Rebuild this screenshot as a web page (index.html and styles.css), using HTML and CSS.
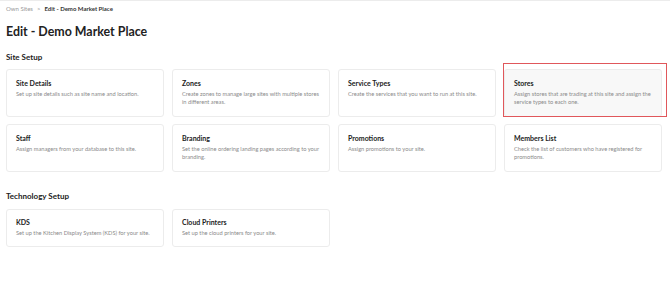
FILE: index.html
```html
<!DOCTYPE html>
<html>
<head>
<meta charset="utf-8">
<link rel="stylesheet" href="styles.css">
</head>
<body>
<div class="page">
  <nav class="crumbs"><span class="crumb-link">Own Sites</span><span class="crumb-sep">&gt;</span><span class="crumb-current">Edit - Demo Market Place</span></nav>
  <h1 class="title">Edit - Demo Market Place</h1>

  <h2 class="section-title">Site Setup</h2>
  <div class="grid">
    <div class="card"><div class="card-title">Site Details</div><div class="card-desc">Set up site details such as site name and location.</div></div>
    <div class="card"><div class="card-title">Zones</div><div class="card-desc">Create zones to manage large sites with multiple stores in different areas.</div></div>
    <div class="card"><div class="card-title">Service Types</div><div class="card-desc">Create the services that you want to run at this site.</div></div>
    <div class="card card-hover"><div class="card-title">Stores</div><div class="card-desc">Assign stores that are trading at this site and assign the service types to each one.</div><div class="highlight"></div></div>
    <div class="card"><div class="card-title">Staff</div><div class="card-desc">Assign managers from your database to this site.</div></div>
    <div class="card"><div class="card-title">Branding</div><div class="card-desc">Set the online ordering landing pages according to your branding.</div></div>
    <div class="card"><div class="card-title">Promotions</div><div class="card-desc">Assign promotions to your site.</div></div>
    <div class="card"><div class="card-title">Members List</div><div class="card-desc">Check the list of customers who have registered for promotions.</div></div>
  </div>

  <h2 class="section-title section-tech">Technology Setup</h2>
  <div class="grid">
    <div class="card card-short"><div class="card-title">KDS</div><div class="card-desc">Set up the Kitchen Display System (KDS) for your site.</div></div>
    <div class="card card-short"><div class="card-title">Cloud Printers</div><div class="card-desc">Set up the cloud printers for your site.</div></div>
  </div>
</div>
</body>
</html>
```
FILE: styles.css
```css
html, body {
  margin: 0;
  padding: 0;
  background: #ffffff;
}
body {
  font-family: Lato, "Open Sans", sans-serif;
  color: #222222;
  border-top: 1px solid #ececec;
}
.page {
  padding: 0 8px 0 6px;
}
.crumbs {
  display: flex;
  gap: 4px;
  font-size: 6px;
  line-height: 8px;
  padding-top: 4px;
}
.crumb-link, .crumb-sep {
  color: #9a9a9a;
}
.crumb-current {
  font-weight: 700;
  color: #333333;
}
.title {
  margin: 0;
  font-size: 12.4px;
  line-height: 18px;
  font-weight: 700;
  padding-top: 10px;
  color: #222222;
}
.section-title {
  margin: 0;
  font-size: 8px;
  line-height: 10px;
  font-weight: 700;
  padding-top: 11px;
  padding-bottom: 7px;
  color: #222222;
}
.section-tech {
  padding-top: 19px;
  padding-bottom: 8px;
}
.grid {
  display: grid;
  grid-template-columns: repeat(4, 1fr);
  column-gap: 8px;
  row-gap: 7px;
}
.card {
  position: relative;
  border: 1px solid #ececec;
  border-radius: 3px;
  padding: 8px 9px 9px;
  min-height: 29px;
  background: #ffffff;
}
.card-short {
  min-height: 20px;
  padding-top: 7px;
}
.card-hover {
  background: #f8f8f8;
}
.card-title {
  font-size: 7px;
  line-height: 10px;
  font-weight: 700;
  color: #222222;
}
.card-desc {
  margin-top: 2px;
  font-size: 5.7px;
  line-height: 8px;
  color: #8a8a8a;
}
.highlight {
  position: absolute;
  left: -2px;
  top: -7px;
  right: -6px;
  bottom: -1px;
  border: 1px solid #e0575b;
  pointer-events: none;
}
```
